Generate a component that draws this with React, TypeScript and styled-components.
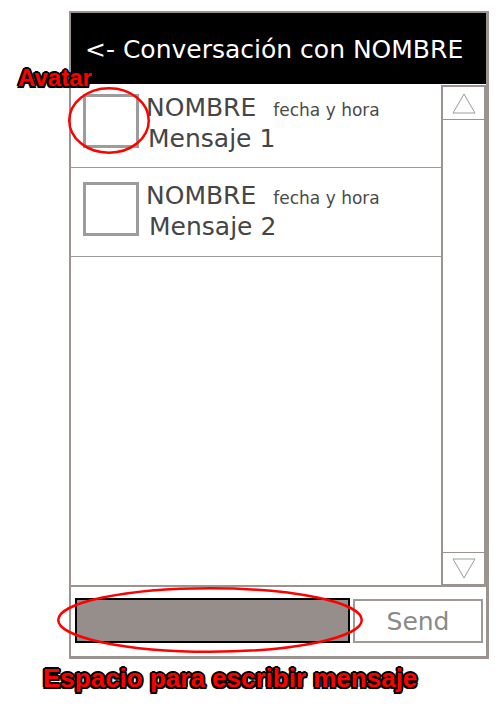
import React from "react";
import styled, { createGlobalStyle } from "styled-components";

const Global = createGlobalStyle`
  html, body { margin: 0; padding: 0; background: #ffffff; }
  body { font-family: "DejaVu Sans", Verdana, sans-serif; }
  * { box-sizing: border-box; }
`;

const Page = styled.div`
  position: relative;
  width: 499px;
  height: 709px;
  padding: 11px 0 0 69px;
`;

const Frame = styled.div`
  width: 420px;
  height: 648px;
  border: 2px solid #9b9390;
  border-right-width: 3px;
  border-bottom-width: 3px;
  display: flex;
  flex-direction: column;
`;

const Header = styled.div`
  height: 71px;
  flex: none;
  background: #000000;
  color: #ffffff;
  font-size: 25px;
  line-height: 28px;
  padding: 23px 0 0 14px;
  white-space: nowrap;
`;

const Body = styled.div`
  height: 501px;
  flex: none;
  display: flex;
`;

const List = styled.div`
  flex: 1;
  display: flex;
  flex-direction: column;
`;

const Item = styled.div<{ $h: number; $pt: number }>`
  height: ${(p) => p.$h}px;
  flex: none;
  border-bottom: 1.5px solid #9a9a9a;
  display: flex;
  align-items: flex-start;
  padding: ${(p) => p.$pt}px 0 0 12px;
  gap: 7px;
`;

const AvatarBox = styled.div<{ $mt: number }>`
  width: 56px;
  height: 54px;
  flex: none;
  border: 3px solid #9c9c9c;
  margin-top: ${(p) => p.$mt}px;
`;

const TextCol = styled.div`
  display: flex;
  flex-direction: column;
  color: #454545;
`;

const NameRow = styled.div`
  display: flex;
  align-items: baseline;
  height: 31px;
`;

const Name = styled.span`
  font-size: 25px;
  line-height: 31px;
`;

const Stamp = styled.span`
  font-size: 17px;
  line-height: 1;
  margin-left: 17px;
  color: #4a4a4a;
`;

const Msg = styled.div<{ $pl: number }>`
  font-size: 25px;
  line-height: 31px;
  padding-left: ${(p) => p.$pl}px;
`;

const Scrollbar = styled.div`
  width: 45px;
  flex: none;
  margin-top: 1px;
  border: 2px solid #9b9390;
  border-bottom-width: 1px;
  display: flex;
  flex-direction: column;
  justify-content: space-between;
`;

const ScrollBtn = styled.div<{ $top?: boolean }>`
  height: 33px;
  display: flex;
  align-items: center;
  justify-content: center;
  ${(p) =>
    p.$top
      ? "border-bottom: 1px solid #9b9390;"
      : "border-top: 1px solid #9b9390; height: 32px;"}
`;

const Footer = styled.div`
  flex: 1;
  border-top: 2px solid #9b9390;
  display: flex;
  align-items: flex-start;
  gap: 3px;
  padding: 11px 0 0 4px;
`;

const InputBox = styled.div`
  width: 275px;
  height: 45px;
  background: #968e8b;
  border: 2px solid #000000;
`;

const SendButton = styled.div`
  width: 130px;
  height: 44px;
  margin-top: 1px;
  border: 2px solid #a19996;
  color: #8a8a8a;
  font-size: 25px;
  display: flex;
  align-items: center;
  justify-content: center;
  padding-top: 1px;
`;

const Label = styled.div<{ $size: number; $x: number; $y: number }>`
  position: absolute;
  left: ${(p) => p.$x}px;
  top: ${(p) => p.$y}px;
  font-family: "Liberation Sans", Arial, sans-serif;
  font-weight: bold;
  font-size: ${(p) => p.$size}px;
  line-height: 1;
  color: #ff0000;
  white-space: nowrap;
  text-shadow: -1.5px -1.5px 0 #000, 1.5px -1.5px 0 #000, -1.5px 1.5px 0 #000,
    1.5px 1.5px 0 #000, 0 -2px 0 #000, 0 2px 0 #000, -2px 0 0 #000,
    2px 0 0 #000, 1px 1px 2px #000;
`;

const Ring = styled.svg<{ $x: number; $y: number }>`
  position: absolute;
  left: ${(p) => p.$x}px;
  top: ${(p) => p.$y}px;
  overflow: visible;
`;

function Triangle({ down }: { down?: boolean }) {
  return (
    <svg width="24" height="21" viewBox="0 0 24 21">
      <polygon
        points={down ? "1,1 23,1 12,20" : "12,1 23,20 1,20"}
        fill="none"
        stroke="#9a9a9a"
        strokeWidth="1"
      />
    </svg>
  );
}

function Ellipse({ x, y, w, h }: { x: number; y: number; w: number; h: number }) {
  return (
    <Ring $x={x} $y={y} width={w} height={h} viewBox={`0 0 ${w} ${h}`}>
      <ellipse
        cx={w / 2}
        cy={h / 2}
        rx={w / 2 - 1.25}
        ry={h / 2 - 1.25}
        fill="none"
        stroke="#ff0000"
        strokeWidth="2.5"
      />
    </Ring>
  );
}

const messages = [
  { text: "Mensaje 1", h: 84, pt: 8, mt: 2, pl: 2 },
  { text: "Mensaje 2", h: 89, pt: 12, mt: 2, pl: 3 },
];

export default function App() {
  return (
    <>
      <Global />
      <Page>
        <Frame>
          <Header>&lt;- Conversación con NOMBRE</Header>
          <Body>
            <List>
              {messages.map((m) => (
                <Item key={m.text} $h={m.h} $pt={m.pt}>
                  <AvatarBox $mt={m.mt} />
                  <TextCol>
                    <NameRow>
                      <Name>NOMBRE</Name>
                      <Stamp>fecha y hora</Stamp>
                    </NameRow>
                    <Msg $pl={m.pl}>{m.text}</Msg>
                  </TextCol>
                </Item>
              ))}
            </List>
            <Scrollbar>
              <ScrollBtn $top>
                <Triangle />
              </ScrollBtn>
              <ScrollBtn>
                <Triangle down />
              </ScrollBtn>
            </Scrollbar>
          </Body>
          <Footer>
            <InputBox />
            <SendButton>Send</SendButton>
          </Footer>
        </Frame>
        <Ellipse x={68} y={87} w={82} h={67} />
        <Label $size={24} $x={18} $y={66}>
          Avatar
        </Label>
        <Ellipse x={57} y={587} w={306} h={66} />
        <Label $size={26} $x={43} $y={665}>
          Espacio para escribir mensaje
        </Label>
      </Page>
    </>
  );
}
